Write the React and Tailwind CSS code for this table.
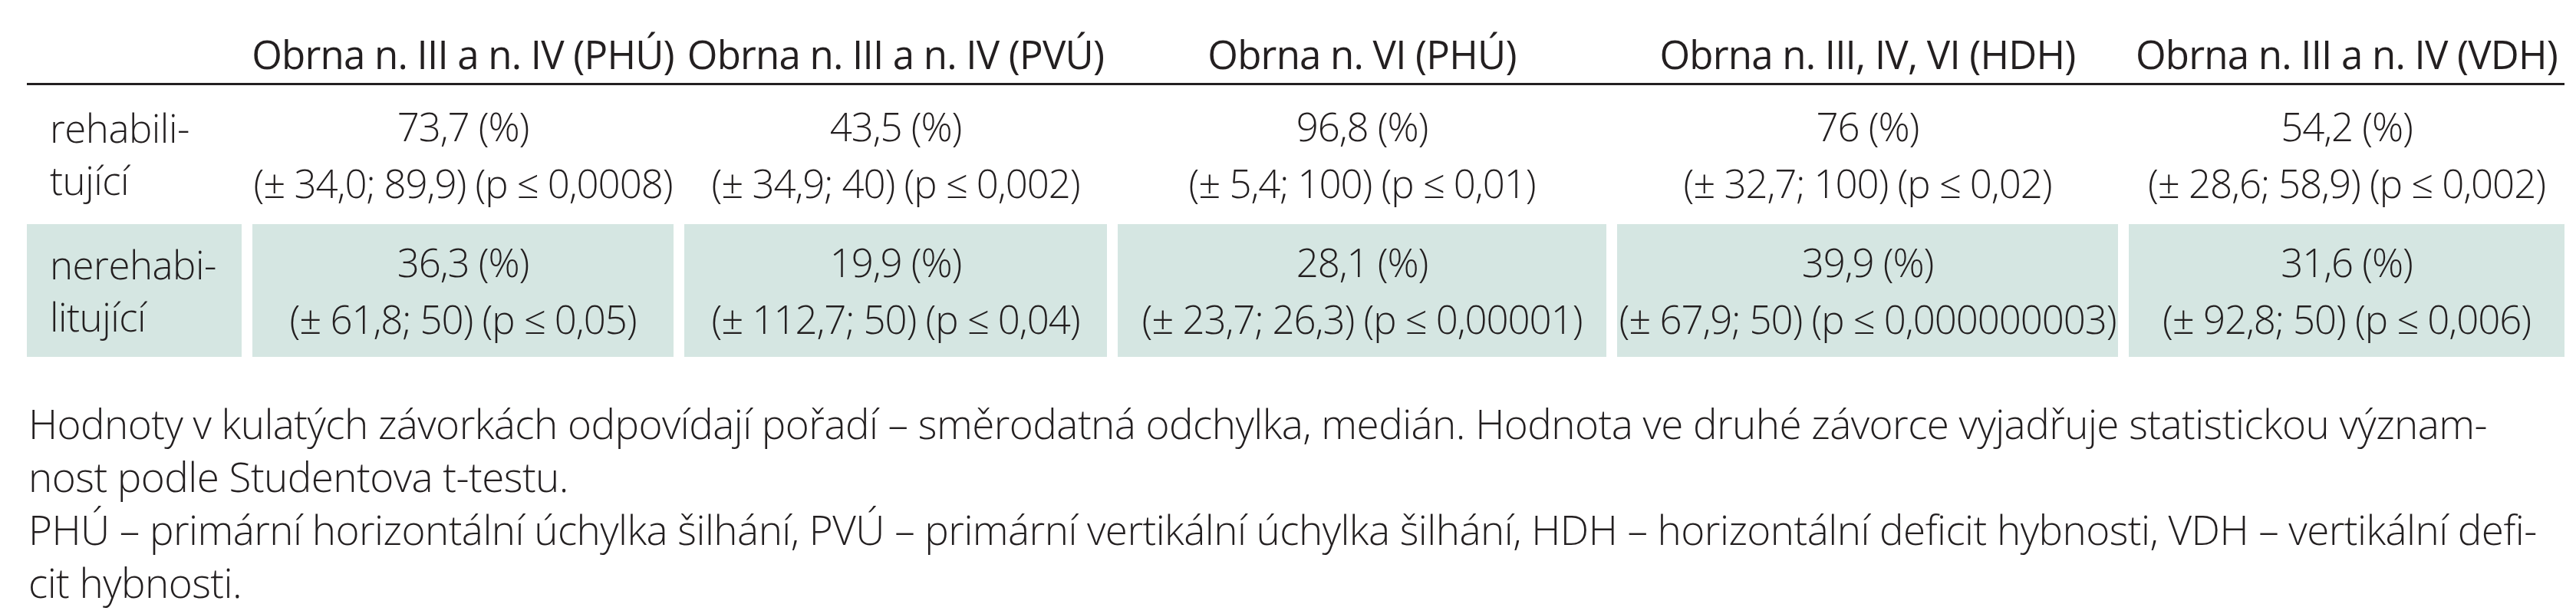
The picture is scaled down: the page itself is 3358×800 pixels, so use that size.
const columns = [
    'Obrna n. III a n. IV (PHÚ)',
    'Obrna n. III a n. IV (PVÚ)',
    'Obrna n. VI (PHÚ)',
    'Obrna n. III, IV, VI (HDH)',
    'Obrna n. III a n. IV (VDH)',
];

const rows = [
    {
        label: ['rehabili-', 'tující'],
        shaded: false,
        cells: [
            ['73,7 (%)', '(± 34,0; 89,9) (p ≤ 0,0008)'],
            ['43,5 (%)', '(± 34,9; 40) (p ≤ 0,002)'],
            ['96,8 (%)', '(± 5,4; 100) (p ≤ 0,01)'],
            ['76 (%)', '(± 32,7; 100) (p ≤ 0,02)'],
            ['54,2 (%)', '(± 28,6; 58,9) (p ≤ 0,002)'],
        ],
    },
    {
        label: ['nerehabi-', 'litující'],
        shaded: true,
        cells: [
            ['36,3 (%)', '(± 61,8; 50) (p ≤ 0,05)'],
            ['19,9 (%)', '(± 112,7; 50) (p ≤ 0,04)'],
            ['28,1 (%)', '(± 23,7; 26,3) (p ≤ 0,00001)'],
            ['39,9 (%)', '(± 67,9; 50) (p ≤ 0,000000003)'],
            ['31,6 (%)', '(± 92,8; 50) (p ≤ 0,006)'],
        ],
    },
];

const notes = [
    'Hodnoty v kulatých závorkách odpovídají pořadí – směrodatná odchylka, medián. Hodnota ve druhé závorce vyjadřuje statistickou význam-',
    'nost podle Studentova t-testu.',
    'PHÚ – primární horizontální úchylka šilhání, PVÚ – primární vertikální úchylka šilhání, HDH – horizontální deficit hybnosti, VDH – vertikální defi-',
    'cit hybnosti.',
];

const grid = 'grid grid-cols-[280px_549px_551px_637px_653px_568px] gap-x-[14px]';

export default function App() {
    return (
        <div
            className="h-[800px] w-full bg-white text-[#231f20] font-light"
            style={{ fontFamily: '"Open Sans", "Noto Sans", sans-serif' }}
        >
            <div className="w-[3308px] ml-[35px] text-[51px] tracking-[-1.1px]">
                <div className={`${grid} h-[111px] border-b-[3px] border-[#231f20]`}>
                    <div />
                    {columns.map((c) => (
                        <div
                            key={c}
                            className="flex items-end justify-center pb-[5px] leading-[66px] font-normal tracking-[-0.8px] whitespace-nowrap"
                        >
                            {c}
                        </div>
                    ))}
                </div>

                {rows.map((r) => (
                    <div key={r.label[0]} className={`${grid} ${r.shaded ? 'mt-[2px]' : 'mt-[0px]'}`}>
                        <div
                            className={`pl-[30px] leading-[68px] tracking-[-0.5px] ${
                                r.shaded ? 'bg-[#d5e6e2] h-[173px] pt-[18px]' : 'h-[179px] pt-[21px]'
                            }`}
                        >
                            {r.label.map((l) => (
                                <div key={l}>{l}</div>
                            ))}
                        </div>
                        {r.cells.map((cell, i) => (
                            <div
                                key={i}
                                className={`flex flex-col items-center leading-[74px] whitespace-nowrap ${
                                    r.shaded ? 'bg-[#d5e6e2] h-[173px] pt-[12px]' : 'h-[179px] pt-[16px]'
                                }`}
                            >
                                <div>{cell[0]}</div>
                                <div>{cell[1]}</div>
                            </div>
                        ))}
                    </div>
                ))}
            </div>

            <div className="ml-[37px] mt-[52px] text-[53px] leading-[69px] tracking-[-0.55px] whitespace-nowrap">
                {notes.map((n) => (
                    <div key={n}>{n}</div>
                ))}
            </div>
        </div>
    );
}
